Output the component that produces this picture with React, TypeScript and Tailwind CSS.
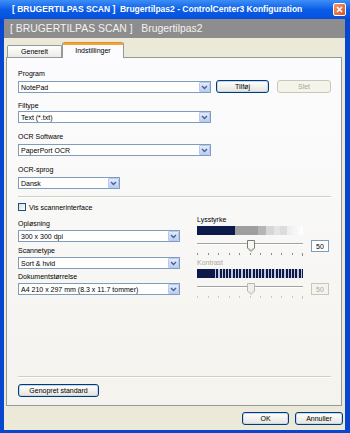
import React from "react";

const Arrow = ({ color = "#4d6185" }: { color?: string }) => (
  <svg width="7" height="5" viewBox="0 0 7 5">
    <path d="M1 1 L3.5 3.5 L6 1" fill="none" stroke={color} strokeWidth="1.4" />
  </svg>
);

const Label = ({ text, mt, gray }: { text: string; mt: string; gray?: boolean }) => (
  <div className={`${mt} h-[9px] text-[7px] leading-[9px] ${gray ? "text-[#aca899]" : "text-black"}`}>
    {text}
  </div>
);

const Combo = ({ text, w, mt }: { text: string; w: string; mt?: string }) => (
  <div className={`${w} ${mt ?? ""} h-[12px] flex items-center bg-white border border-[#7f9db9]`}>
    <span className="flex-1 pl-[2px] text-[7px] leading-[9px] text-black whitespace-nowrap overflow-hidden">
      {text}
    </span>
    <div className="w-[11px] h-[10px] flex items-center justify-center rounded-[1px] border border-[#b7c9f2] bg-gradient-to-b from-[#e3ebfd] to-[#bccff8]">
      <Arrow />
    </div>
  </div>
);

const Button = ({ text, w, disabled }: { text: string; w: string; disabled?: boolean }) => (
  <div
    className={`${w} h-[13px] flex items-center justify-center rounded-[3px] border text-[7px] leading-[9px] ${
      disabled
        ? "border-[#c9c7ba] bg-[#f5f4ea] text-[#aca899]"
        : "border-[#003c74] bg-gradient-to-b from-white to-[#e6e4d9] text-black shadow-[inset_0_0_0_1px_#c5d5f5]"
    }`}
  >
    {text}
  </div>
);

const Thumb = ({ disabled }: { disabled?: boolean }) => (
  <svg width="8" height="12" viewBox="0 0 8 12">
    <path
      d="M0.5 0.5 H7.5 V8 L4 11.5 L0.5 8 Z"
      fill={disabled ? "#f0efea" : "#f7f7f4"}
      stroke={disabled ? "#b8b8b0" : "#7a7a72"}
      strokeWidth="1"
    />
    <path d="M1.5 8 L4 10.5 L6.5 8" fill="none" stroke={disabled ? "#d4d4cc" : "#b0b0a8"} strokeWidth="1" />
  </svg>
);

const Slider = ({ disabled }: { disabled?: boolean }) => (
  <div className="flex flex-col">
    <div className="flex items-start">
      <div className="relative w-[106px] h-[13px]">
        <div className="mt-[3px] h-[2px] border-t border-[#a3a3a0] bg-white" />
        <div className="absolute left-[50px] top-0">
          <Thumb disabled={disabled} />
        </div>
      </div>
      <div
        className={`ml-[8px] w-[18px] h-[12px] flex items-center justify-center border text-[7px] leading-[9px] ${
          disabled ? "border-[#c9c7ba] bg-[#f4f3ee] text-[#aca899]" : "border-[#7f9db9] bg-white text-black"
        }`}
      >
        50
      </div>
    </div>
    <div className="w-[106px] h-[3px] flex justify-between items-start">
      {[0, 1, 2, 3, 4, 5, 6, 7, 8, 9].map((i) => (
        <div key={i} className={`w-px h-[2px] ${disabled ? "bg-[#c8c8c0]" : "bg-[#8a8a84]"}`} />
      ))}
      <div className={`w-px h-[3px] ${disabled ? "bg-[#c8c8c0]" : "bg-[#8a8a84]"}`} />
    </div>
  </div>
);

export default function App() {
  return (
    <div className="font-['Liberation_Sans',Arial,sans-serif] w-[350px] h-[433px] flex flex-col bg-[#0747d0] overflow-hidden">
      {/* title bar */}
      <div className="h-[19px] flex items-center pl-[12px] pr-[4px] bg-gradient-to-b from-[#3d8ef5] via-[#0a5de8] to-[#0550dc]">
        <span className="flex-1 text-white font-bold text-[8.5px] leading-[11px] whitespace-nowrap">
          [ BRUGERTILPAS SCAN ]&nbsp;&nbsp;Brugertilpas2 - ControlCenter3 Konfiguration
        </span>
        <div className="w-[13px] h-[13px] flex items-center justify-center rounded-[2px] border border-white bg-gradient-to-br from-[#f09a6a] to-[#d4522a]">
          <svg width="7" height="7" viewBox="0 0 7 7">
            <path d="M1 1 L6 6 M6 1 L1 6" stroke="white" strokeWidth="1.6" />
          </svg>
        </div>
      </div>

      <div className="flex-1 flex flex-col ml-[4px] mr-[5px] mb-[3px] bg-[#ece9d8]">
        {/* header band */}
        <div className="h-[19px] flex items-center pl-[6px] bg-[#8d8d8d]">
          <span className="text-[10.4px] leading-[12px] text-[#f2f2f2] whitespace-nowrap">
            [ BRUGERTILPAS SCAN ]&nbsp;&nbsp;&nbsp;Brugertilpas2
          </span>
        </div>

        {/* tabs */}
        <div className="mt-[4px] h-[15px] flex items-end pl-[3px]">
          <div className="w-[55px] h-[12px] flex items-center justify-center border border-b-0 border-[#919b9c] rounded-t-[2px] bg-gradient-to-b from-white to-[#ecebe6] text-[7px] leading-[9px]">
            Generelt
          </div>
          <div className="relative z-10 w-[62px] h-[16px] -mb-px flex flex-col border-x border-[#919b9c] rounded-t-[2px] bg-[#fcfcfe]">
            <div className="h-[3px] rounded-t-[2px] bg-[#f2a33a] border-t border-[#e68b2c]" />
            <div className="flex-1 flex items-start justify-center pt-px text-[7px] leading-[9px]">Indstillinger</div>
          </div>
        </div>

        {/* tab page */}
        <div className="ml-[2px] mr-[3px] h-[349px] flex flex-col pl-[11px] pr-[10px] border border-[#919b9c] bg-gradient-to-b from-[#fcfcfe] to-[#f4f3ee]">
          <Label text="Program" mt="mt-[11px]" />
          <div className="mt-[2px] flex items-end">
            <Combo text="NotePad" w="w-[193px]" />
            <div className="ml-[5px]">
              <Button text="Tilføj" w="w-[53px]" />
            </div>
            <div className="ml-[8px]">
              <Button text="Slet" w="w-[54px]" disabled />
            </div>
          </div>

          <Label text="Filtype" mt="mt-[8px]" />
          <Combo text="Text (*.txt)" w="w-[193px]" mt="mt-[1px]" />

          <Label text="OCR Software" mt="mt-[9px]" />
          <Combo text="PaperPort OCR" w="w-[193px]" mt="mt-[3px]" />

          <Label text="OCR-sprog" mt="mt-[9px]" />
          <Combo text="Dansk" w="w-[102px]" mt="mt-[3px]" />

          <div className="mt-[7px] h-[2px] border-t border-[#d0d0bf] bg-white" />

          <div className="mt-[5px] h-[8px] flex items-center">
            <div className="w-[8px] h-[8px] border border-[#1c5180] bg-gradient-to-br from-[#dcdcd7] to-white" />
            <span className="ml-[3px] text-[7px] leading-[9px]">Vis scannerinterface</span>
          </div>

          <div className="flex">
            <div className="w-[162px] flex flex-col">
              <Label text="Opløsning" mt="mt-[8px]" />
              <Combo text="300 x 300 dpi" w="w-[162px]" mt="mt-[2px]" />
              <Label text="Scannetype" mt="mt-[4px]" />
              <Combo text="Sort & hvid" w="w-[162px]" mt="mt-[2px]" />
              <Label text="Dokumentstørrelse" mt="mt-[3px]" />
              <Combo text="A4 210 x 297 mm (8.3 x 11.7 tommer)" w="w-[162px]" mt="mt-[2px]" />
            </div>

            <div className="ml-[17px] flex flex-col">
              <Label text="Lysstyrke" mt="mt-[4px]" />
              <div className="mt-[2px] w-[106px] h-[9px] flex">
                <div className="w-[38px] bg-[#0b1a4a]" />
                <div className="w-[23px] bg-[#9e9e9e]" />
                <div className="w-[8px] bg-[#b5b5b5]" />
                <div className="w-[8px] bg-[#d6d6d6]" />
                <div className="w-[6px] bg-[#e4e4e4]" />
                <div className="w-[7px] bg-[#dcdcdc]" />
                <div className="flex-1 bg-gradient-to-r from-[#ececec] to-white" />
              </div>
              <div className="mt-[5px]">
                <Slider />
              </div>

              <Label text="Kontrast" mt="mt-[2px]" gray />
              <div className="mt-[2px] w-[106px] h-[9px] flex">
                <div className="w-[16px] bg-[#0b1a4a]" />
                <div className="flex-1 bg-[repeating-linear-gradient(90deg,#0b1a4a_0px,#0b1a4a_2px,#c3c8da_2px,#c3c8da_3.3px)]" />
              </div>
              <div className="mt-[5px]">
                <Slider disabled />
              </div>
            </div>
          </div>

          <div className="mt-auto h-[2px] border-t border-[#d0d0bf] bg-white" />
          <div className="mt-[6px] mb-[8px]">
            <Button text="Genopret standard" w="w-[81px]" />
          </div>
        </div>

        {/* dialog buttons */}
        <div className="mt-[6px] mr-[2px] flex justify-end gap-[6px]">
          <Button text="OK" w="w-[47px]" />
          <Button text="Annuller" w="w-[48px]" />
        </div>
      </div>
    </div>
  );
}
